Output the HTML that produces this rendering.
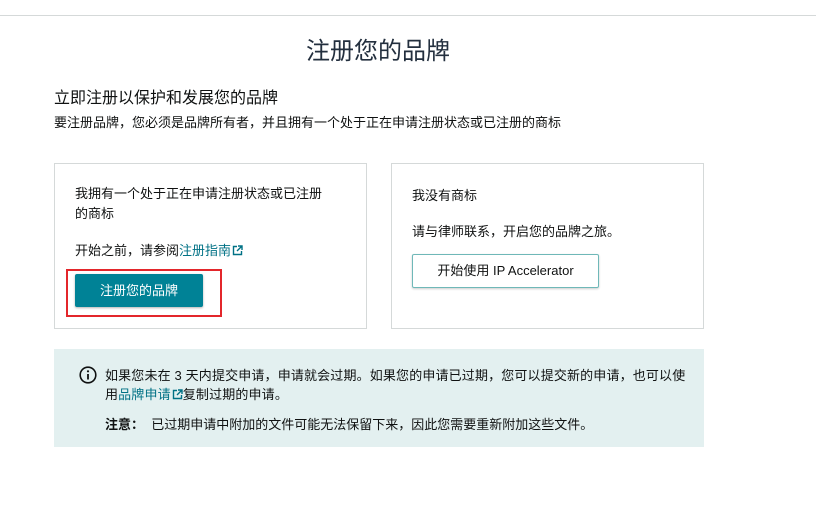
<!DOCTYPE html>
<html><head><meta charset="utf-8"><style>
*{margin:0;padding:0;box-sizing:border-box}
body{width:816px;height:505px;background:#fff;font-family:"Liberation Sans","Noto Sans CJK SC",sans-serif;color:#0f1111;position:relative;overflow:hidden}
.a{position:absolute;white-space:nowrap}
.card{position:absolute;border:1px solid #d5d9d9;background:#fff}
.lnk{color:#007185}
.ext{display:inline-block;vertical-align:-1px;margin-left:1px}
</style></head><body>
<div class="a" style="left:0;top:15px;width:816px;height:1px;background:#d5d9d9"></div>
<div class="a" style="left:0;width:756px;top:31px;text-align:center;font-size:24px;color:#232f3e">注册您的品牌</div>
<div class="a" style="left:54px;top:84px;font-size:16px">立即注册以保护和发展您的品牌</div>
<div class="a" style="left:54px;top:112px;font-size:13px">要注册品牌，您必须是品牌所有者，并且拥有一个处于正在申请注册状态或已注册的商标</div>

<div class="card" style="left:54px;top:163px;width:313px;height:166px"></div>
<div class="a" style="left:75px;top:184px;font-size:13px;line-height:20px">我拥有一个处于正在申请注册状态或已注册<br>的商标</div>
<div class="a" style="left:75px;top:240px;font-size:13px">开始之前，请参阅<span class="lnk">注册指南<svg class="ext" width="11" height="11" viewBox="0 0 11 11"><path d="M5 1.5H1.5v8h8V6" fill="none" stroke="#007185" stroke-width="1.4"/><path d="M6 1h4v4M10 1L5 6" fill="none" stroke="#007185" stroke-width="1.4"/></svg></span></div>
<div class="a" style="left:66px;top:269px;width:156px;height:48px;border:2px solid #e3262b"></div>
<div class="a" style="left:75px;top:274px;width:128px;height:33px;background:#008296;border-radius:2px;box-shadow:0 1px 2px rgba(0,0,0,.3);color:#fff;font-size:13px;text-align:center;line-height:33px">注册您的品牌</div>

<div class="card" style="left:391px;top:163px;width:313px;height:166px"></div>
<div class="a" style="left:412px;top:185px;font-size:13px">我没有商标</div>
<div class="a" style="left:412px;top:221px;font-size:13px">请与律师联系，开启您的品牌之旅。</div>
<div class="a" style="left:412px;top:254px;width:187px;height:34px;border:1px solid #6fb8b8;border-radius:2px;box-shadow:0 1px 2px rgba(0,0,0,.2);font-size:13px;text-align:center;line-height:32px">开始使用 IP Accelerator</div>

<div class="a" style="left:54px;top:349px;width:650px;height:98px;background:#e3f0f0"></div>
<svg class="a" style="left:79px;top:366px" width="18" height="18" viewBox="0 0 18 18"><circle cx="9" cy="9" r="7.8" fill="none" stroke="#0f1111" stroke-width="1.6"/><circle cx="9" cy="5.3" r="1.1" fill="#0f1111"/><path d="M9 8v5.5" stroke="#0f1111" stroke-width="1.8"/></svg>
<div class="a" style="left:105px;top:366px;font-size:13px;line-height:19px;letter-spacing:0.15px">如果您未在 3 天内提交申请，申请就会过期。如果您的申请已过期，您可以提交新的申请，也可以使<br>用<span class="lnk">品牌申请<svg class="ext" width="11" height="11" viewBox="0 0 11 11"><path d="M5 1.5H1.5v8h8V6" fill="none" stroke="#007185" stroke-width="1.4"/><path d="M6 1h4v4M10 1L5 6" fill="none" stroke="#007185" stroke-width="1.4"/></svg></span>复制过期的申请。</div>
<div class="a" style="left:105px;top:414px;font-size:13px"><b>注意：</b>&nbsp; 已过期申请中附加的文件可能无法保留下来，因此您需要重新附加这些文件。</div>
</body></html>
